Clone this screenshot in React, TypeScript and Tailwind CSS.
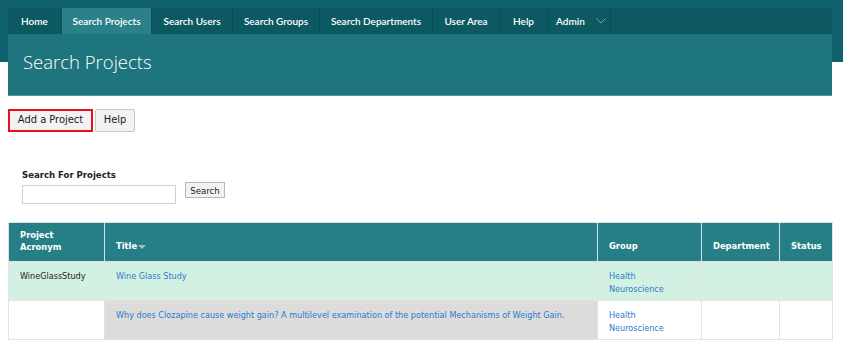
const navItems = [
  { label: "Home", w: "w-[54px]" },
  { label: "Search Projects", w: "w-[90px]", active: true },
  { label: "Search Users", w: "w-[81px]" },
  { label: "Search Groups", w: "w-[87px]" },
  { label: "Search Departments", w: "w-[113px]" },
  { label: "User Area", w: "w-[67px]" },
  { label: "Help", w: "w-[48px]" },
];

const verdana = "font-['DejaVu_Sans_Condensed','DejaVu_Sans',Verdana,sans-serif]";

export default function App() {
  return (
    <div className="min-h-[343px] bg-white font-['Open_Sans',sans-serif]">
      <div className="bg-[linear-gradient(to_bottom,#10636d_0,#10636d_62px,#ffffff_62px)] pl-2 pr-[11px] pt-2">
        <nav className="flex h-[26px] bg-[#0c5962] font-['Lato',sans-serif] text-[10px] font-semibold text-white">
          {navItems.map((item) => (
            <a
              key={item.label}
              className={`flex ${item.w} shrink-0 items-center justify-center whitespace-nowrap border-r border-[#0a4f57] ${
                item.active ? "bg-[#2a8189]" : ""
              }`}
            >
              {item.label}
            </a>
          ))}
          <a className="flex w-[63px] shrink-0 items-center border-r border-[#0a4f57] pl-[8px]">
            Admin
            <svg className="ml-auto mr-[4px] h-[6px] w-[10px] shrink-0" viewBox="0 0 10 6" fill="none">
              <path d="M0.5 0.5 L5 5 L9.5 0.5" stroke="#6fa6ab" strokeWidth="1" />
            </svg>
          </a>
        </nav>
        <header className="flex h-[62px] items-center border-b border-[#4e9ba1] bg-[#1f757e] pb-[5px] pl-[15px]">
          <h1 className="text-[18.5px] font-light text-white">Search Projects</h1>
        </header>
      </div>

      <div className={`${verdana} px-2`}>
        <div className="mt-[13px] flex gap-[2px]">
          <button className="h-[23px] w-[85px] border-2 border-[#e8101c] bg-[#f2f2f2] text-[11px] text-[#222]">
            Add a Project
          </button>
          <button className="h-[23px] w-[40px] rounded-[2px] border border-[#c8c8c8] bg-[#f2f2f2] text-[11px] text-[#222]">
            Help
          </button>
        </div>

        <div className="mt-[36px] pl-[14px]">
          <label className="block text-[9.5px] font-bold text-[#222]">Search For Projects</label>
          <div className="mt-[3px] flex items-start gap-[9px]">
            <input className="h-[19px] w-[154px] border border-[#cfcfcf] bg-white" />
            <button className="-mt-[3px] h-[16px] w-[40px] border border-[#b8b8b8] bg-[#f2f2f2] text-[9.5px] leading-none text-[#222]">
              Search
            </button>
          </div>
        </div>

        <table className="mt-[18px] w-[824px] table-fixed border-collapse border border-[#e2e2e2] text-[9px]">
          <colgroup>
            <col className="w-[96px]" />
            <col className="w-[493px]" />
            <col className="w-[104px]" />
            <col className="w-[78px]" />
            <col className="w-[53px]" />
          </colgroup>
          <thead>
            <tr className="h-[39px] bg-[#267f86] text-left align-bottom text-[9.3px] font-bold text-white">
              <th className="border-r border-[#cfe3e4] px-[11px] pb-[8px] leading-[12px]">
                Project
                <br />
                Acronym
              </th>
              <th className="border-r border-[#cfe3e4] px-[11px] pb-[8px]">
                Title
                <span className="ml-[1px] inline-block border-x-[4px] border-t-[4px] border-x-transparent border-t-[#9cc3c6] align-middle" />
              </th>
              <th className="border-r border-[#cfe3e4] px-[11px] pb-[8px]">Group</th>
              <th className="border-r border-[#cfe3e4] px-[11px] pb-[8px]">Department</th>
              <th className="px-[11px] pb-[8px]">Status</th>
            </tr>
          </thead>
          <tbody className="align-top leading-[13px]">
            <tr className="h-[39px] bg-[#d3f1e2]">
              <td className="border border-[#e2e2e2] px-[11px] pt-[8px] text-[#222]">WineGlassStudy</td>
              <td className="border border-[#e2e2e2] px-[11px] pt-[8px]">
                <a className="text-[#2b7bc9]">Wine Glass Study</a>
              </td>
              <td className="border border-[#e2e2e2] px-[11px] pt-[8px]">
                <a className="text-[#2b7bc9]">
                  Health
                  <br />
                  Neuroscience
                </a>
              </td>
              <td className="border border-[#e2e2e2]" />
              <td className="border border-[#e2e2e2]" />
            </tr>
            <tr className="h-[39px] bg-white">
              <td className="border border-[#e2e2e2]" />
              <td className="border border-[#e2e2e2] bg-[#dcdcdc] px-[11px] pt-[8px]">
                <a className="text-[#2b7bc9]">
                  Why does Clozapine cause weight gain? A multilevel examination of the potential Mechanisms of Weight Gain.
                </a>
              </td>
              <td className="border border-[#e2e2e2] px-[11px] pt-[8px]">
                <a className="text-[#2b7bc9]">
                  Health
                  <br />
                  Neuroscience
                </a>
              </td>
              <td className="border border-[#e2e2e2]" />
              <td className="border border-[#e2e2e2]" />
            </tr>
          </tbody>
        </table>
      </div>
    </div>
  );
}
